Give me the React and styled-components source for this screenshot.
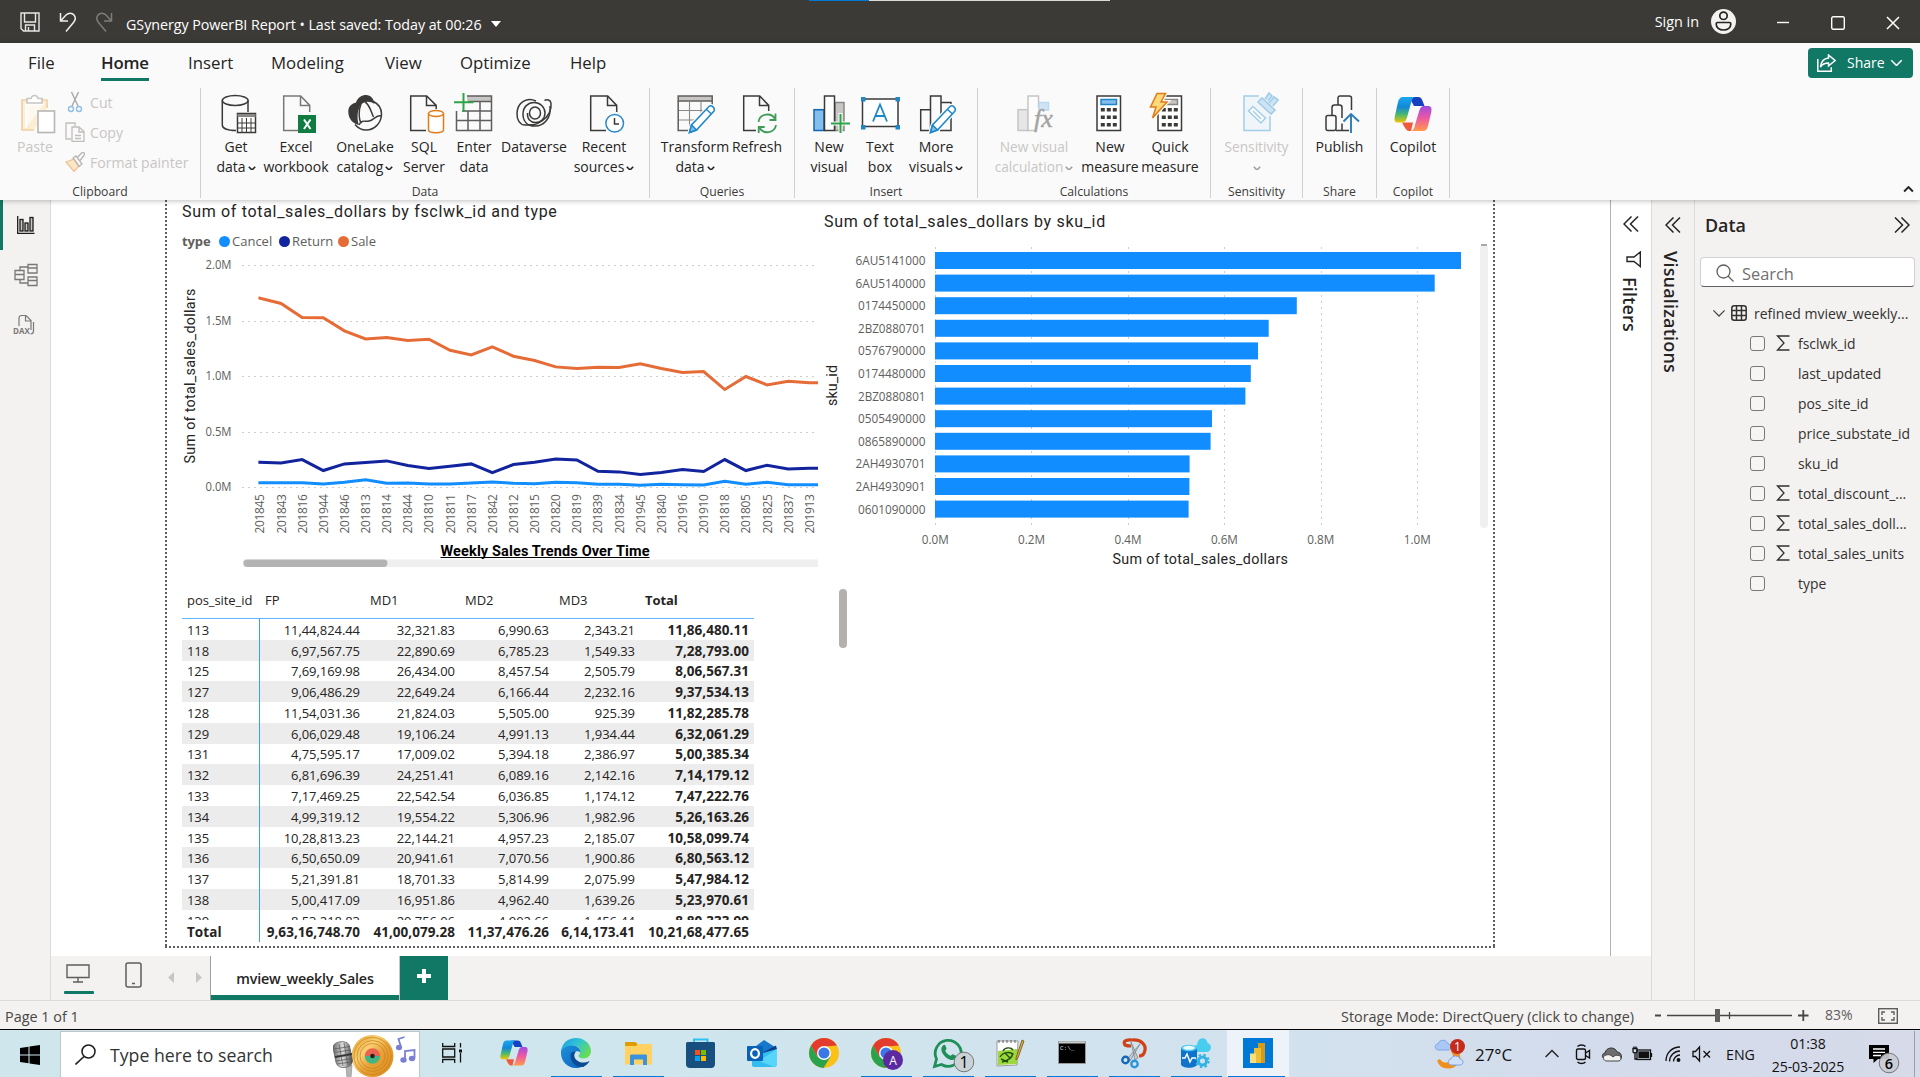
import React from "react";
import styled, { createGlobalStyle, css } from "styled-components";

const UI = `"Open Sans", "Noto Sans", sans-serif`;
const DIN = `Roboto, "Liberation Sans", sans-serif`;
const GREEN = "#117865";

const Global = createGlobalStyle`
  * { box-sizing: border-box; }
  html, body { margin: 0; padding: 0; }
  body { font-family: ${UI}; color: #252423; background: #f3f2f1; overflow: hidden; }
  svg { display: block; flex: none; }
`;

const Window = styled.div`
  width: 1920px;
  height: 1077px;
  display: flex;
  flex-direction: column;
  overflow: hidden;
`;

/* ---------- title bar ---------- */
const TitleBar = styled.header`
  height: 43px;
  flex: none;
  display: flex;
  align-items: center;
  background: #3b3a37;
  color: #fff;
  position: relative;
`;
const LoadStrip = styled.div`
  position: absolute;
  top: 0;
  left: 809px;
  width: 301px;
  height: 1px;
  background: linear-gradient(to right, #0078d4 60px, #d9d9d6 60px);
`;
const QuickTools = styled.div`
  display: flex;
  gap: 16px;
  padding-left: 20px;
  width: 126px;
`;
const DocTitle = styled.div`
  font-size: 14.3px;
  padding-top: 5px;
  letter-spacing: -0.05px;
  white-space: nowrap;
  display: flex;
  align-items: center;
  gap: 9px;
`;
const Account = styled.div`
  margin-left: auto;
  display: flex;
  align-items: center;
  gap: 12px;
  font-size: 14.4px;
  margin-right: 40px;
`;
const WindowButtons = styled.div`
  display: flex;
  gap: 41px;
  padding: 3px 20px 0 0;
`;

/* ---------- ribbon ---------- */
const Ribbon = styled.section`
  height: 157px;
  flex: none;
  background: #fafafa;
  box-shadow: 0 1px 5px rgba(0, 0, 0, 0.25);
  position: relative;
  z-index: 2;
`;
const MenuRow = styled.nav`
  height: 45px;
  display: flex;
  padding-left: 28px;
  position: relative;
`;
const MenuItem = styled.div`
  width: ${(p) => p.$w}px;
  font-size: 16.8px;
  letter-spacing: ${(p) => (p.$active ? "-0.2px" : "0")};
  line-height: 39px;
  font-weight: ${(p) => (p.$active ? 600 : 400)};
  span {
    display: inline-block;
    height: 38px;
    ${(p) => p.$active && css`border-bottom: 3px solid ${GREEN};`}
  }
`;
const ShareButton = styled.button`
  margin: 5px 7px 0 auto;
  width: 105px;
  height: 30px;
  border: 0;
  border-radius: 4px;
  background: ${GREEN};
  color: #fff;
  font: 14px ${UI};
  display: flex;
  align-items: center;
  padding: 0 0 1px 9px;
  svg:first-child { margin-right: 11px; }
  svg:last-child { margin-left: 5px; }
`;
const Groups = styled.div`
  height: 110px;
  display: flex;
  position: relative;
`;
const Group = styled.div`
  width: ${(p) => p.$w}px;
  border-right: 1px solid #d2d0ce;
  display: flex;
  flex-direction: column;
  justify-content: space-between;
`;
const GroupBody = styled.div`
  display: flex;
  padding-left: ${(p) => p.$pad || 0}px;
`;
const GroupLabel = styled.div`
  font-size: 12.2px;
  line-height: 12px;
  text-align: center;
  color: #3b3a39;
`;
const BigButton = styled.div`
  width: ${(p) => p.$w}px;
  padding-top: 6px;
  display: flex;
  flex-direction: column;
  align-items: center;
  font-size: ${(p) => (p.$off ? 13.7 : 14)}px;
  line-height: 20px;
  white-space: nowrap;
  color: ${(p) => (p.$off ? "#c8c6c4" : "#252423")};
  > svg { margin-bottom: 3px; overflow: visible; ${(p) => p.$off && "opacity: 0.45;"} }
`;
const Line = styled.span`
  display: flex;
  align-items: center;
  gap: 2px;
  height: 20px;
  svg { margin-top: 2px; }
`;
const Clip = styled.div`
  display: flex;
  padding-left: 17px;
  color: #c8c6c4;
  font-size: 14.1px;
`;
const PasteBox = styled.div`
  width: 46px;
  padding-top: 6px;
  line-height: 20px;
  svg { margin-bottom: 3px; }
`;
const ClipList = styled.div`
  display: flex;
  flex-direction: column;
`;
const ClipItem = styled.div`
  height: 30px;
  display: flex;
  align-items: center;
  gap: 5px;
  padding: 0 0 2px 2px;
`;
const Collapse = styled.div`
  margin: auto 6px 5px auto;
`;

/* ---------- work area ---------- */
const Work = styled.main`
  height: 800px;
  flex: none;
  display: flex;
`;
const Rail = styled.aside`
  width: 51px;
  border-right: 1px solid #dddbd9;
  background: #f3f2f1;
`;
const RailItem = styled.div`
  height: 50px;
  border-left: 3px solid ${(p) => (p.$active ? GREEN : "transparent")};
  display: flex;
  align-items: center;
  padding-left: 10px;
`;
const Center = styled.div`
  width: 1600px;
  display: flex;
  flex-direction: column;
`;
const CanvasRow = styled.div`
  height: 756px;
  display: flex;
`;
const Canvas = styled.div`
  width: 1560px;
  background: #fff;
  border-right: 1px solid #b3b0ad;
  padding-left: 114px;
`;
const dots = (dir) => `repeating-linear-gradient(${dir}, #605e5c 0 2px, transparent 2px 4px)`;
const Page = styled.div`
  width: 1330px;
  height: 748px;
  display: grid;
  grid-template-columns: 653px 677px;
  background: ${dots("to bottom")} left / 2px 100% no-repeat,
    ${dots("to bottom")} right / 2px 100% no-repeat,
    ${dots("to right")} bottom / 100% 2px no-repeat;
`;
const VisualTitle = styled.h3`
  margin: ${(p) => p.$m};
  font: 400 16px/22px ${DIN};
  letter-spacing: ${(p) => p.$track};
  white-space: nowrap;
  color: #252423;
`;
const Legend = styled.div`
  display: flex;
  align-items: center;
  height: 20px;
  margin: 8px 0 0 17px;
  font-size: 13px;
  color: #605e5c;
  b { width: 37px; letter-spacing: -0.1px; }
`;
const Key = styled.span`
  display: flex;
  align-items: center;
  gap: 2px;
  width: ${(p) => p.$w}px;
  &::before {
    content: "";
    width: 11px;
    height: 11px;
    border-radius: 50%;
    background: ${(p) => p.$c};
  }
`;
const ScrollThumb = styled.div`
  width: 8px;
  height: 59px;
  margin: 16px 0 0 21px;
  border-radius: 4px;
  background: #b3b0ad;
`;

/* ---------- matrix ---------- */
const Matrix = styled.div`
  margin: 11px 0 0 17px;
  width: 572px;
  font-size: 13px;
`;
const MatrixRow = styled.div`
  display: grid;
  grid-template-columns: 78px 105px 95px 94px 86px 114px;
  height: ${(p) => p.$h || 20.77}px;
  align-items: stretch;
  background: ${(p) => (p.$band ? "#ececec" : "transparent")};
  ${(p) => p.$head && "border-bottom: 1px solid #5fb3ff;"}
`;
const Cell = styled.div`
  display: flex;
  align-items: center;
  white-space: nowrap;
  color: #252423;
  letter-spacing: ${(p) => (p.$bold && !p.$head ? "0.05px" : "-0.06px")};
  font-weight: ${(p) => (p.$bold ? 700 : 400)};
  font-size: ${(p) => (p.$bold && !p.$head ? 13.5 : 13)}px;
  justify-content: ${(p) => (p.$left ? "flex-start" : "flex-end")};
  padding: ${(p) => (p.$head ? "0 0 2px 5px" : "1px 5px 0 5px")};
  ${(p) => p.$rule && "border-right: 1px solid #3a9dfb;"}
`;
const MatrixBody = styled.div`
  height: 301px;
  overflow: hidden;
`;

/* ---------- panes ---------- */
const FiltersPane = styled.aside`
  width: 40px;
  background: #fff;
  display: flex;
  flex-direction: column;
  align-items: flex-start;
  padding: 16px 0 0 12px;
`;
const VisPane = styled.aside`
  width: 44px;
  border-left: 1px solid #dddbd9;
  border-right: 1px solid #dddbd9;
  padding: 17px 0 0 13px;
  background: #f3f2f1;
`;
const SideText = styled.div`
  writing-mode: vertical-rl;
  font-size: 18px;
  font-weight: 600;
  line-height: 22px;
  letter-spacing: 0.2px;
  margin: ${(p) => p.$m};
`;
const DataPane = styled.aside`
  width: 225px;
  background: #f3f2f1;
  padding: 12px 5px 0 5px;
`;
const PaneHead = styled.div`
  display: flex;
  justify-content: space-between;
  align-items: center;
  height: 25px;
  padding: 0 5px 0 5px;
  font-size: 17.9px;
  font-weight: 600;
`;
const SearchField = styled.div`
  margin-top: 20px;
  height: 30px;
  width: 215px;
  border: 1px solid #d1d1d1;
  border-bottom-color: #616161;
  border-radius: 4px;
  background: #fff;
  display: flex;
  align-items: center;
  gap: 8px;
  padding: 2px 0 0 15px;
  font-size: 16.4px;
  color: #707070;
`;
const TreeRow = styled.div`
  height: 30px;
  display: flex;
  align-items: center;
  font-size: ${(p) => (p.$root ? 14 : 13.9)}px;
  white-space: nowrap;
  color: #323130;
  margin-top: ${(p) => (p.$root ? 11 : 0)}px;
  padding-left: ${(p) => (p.$root ? 12 : 50)}px;
`;
const TableGlyph = styled.svg`
  margin: 0 7px 0 5px;
`;
const Funnel = styled.svg`
  margin: 19px 0 0 3px;
`;
const Check = styled.span`
  width: 15px;
  height: 15px;
  border: 1px solid #7a7876;
  border-radius: 3px;
  background: #f6f5f4;
`;
const SigmaSlot = styled.span`
  width: 33px;
  padding-left: 11px;
`;

/* ---------- page tabs + status ---------- */
const TabBar = styled.div`
  height: 44px;
  background: #f3f2f1;
  display: flex;
`;
const ViewSwitch = styled.div`
  width: ${(p) => p.$w}px;
  padding: ${(p) => p.$pad};
  svg { overflow: visible; }
`;
const SwitchBar = styled.div`
  width: 30px;
  height: 3px;
  border-radius: 1px;
  margin: 8px 0 0 -2px;
  background: ${GREEN};
`;
const PageTab = styled.div`
  width: 190px;
  border-left: 1px solid #a19f9d;
  border-right: 1px solid #c8c6c4;
  box-shadow: inset 0 -5px 0 ${GREEN};
  background: #fff;
  font-size: 14.3px;
  font-weight: 600;
  letter-spacing: -0.18px;
  line-height: 46px;
  text-align: center;
`;
const AddTab = styled.div`
  width: 48px;
  background: ${GREEN};
  display: flex;
  justify-content: center;
  padding-top: 13px;
`;
const StatusBar = styled.footer`
  height: 30px;
  flex: none;
  border-top: 1px solid #dddbd9;
  border-bottom: 1px solid #000;
  background: #f3f2f1;
  display: flex;
  align-items: center;
  padding: 2px 22px 0 5px;
  font-size: 14.4px;
  color: #484644;
`;
const StatusRight = styled.div`
  margin-left: auto;
  display: flex;
  align-items: center;
`;
const Zoom = styled.span`
  width: 53px;
  color: #605e5c;
  padding-bottom: 3px;
  font-size: 14px;
`;

/* ---------- taskbar ---------- */
const Taskbar = styled.div`
  height: 47px;
  flex: none;
  display: flex;
  background: linear-gradient(to right, #cfe6ec 0, #cfe6ee 35%, #d2e2ee 65%, #d3dcec 82%, #d6dae9 100%);
  color: #111;
`;
const StartButton = styled.div`
  width: 60px;
  padding: 15px 0 0 20px;
`;
const TaskSearch = styled.div`
  width: 360px;
  margin-top: 1px;
  border: 1px solid #bfc5c8;
  border-bottom: 0;
  background: #fff;
  display: flex;
  align-items: center;
  padding-left: 14px;
  font-size: 17.7px;
  color: #333;
  svg:first-child { margin-right: 14px; }
  svg:last-child { margin-left: auto; margin-right: 2px; }
`;
const AppSlot = styled.div`
  width: ${(p) => p.$w || 62}px;
  height: 47px;
  display: flex;
  align-items: center;
  justify-content: center;
  padding-bottom: 1px;
  background-image: ${(p) => (p.$run ? "linear-gradient(#0078d7, #0078d7)" : "none")};
  background-size: 51px 1px;
  background-repeat: no-repeat;
  background-position: 6px bottom;
  ${(p) => p.$active && "background-color: rgba(255,255,255,.6); background-size: 57px 1px; background-position: 1px bottom;"}
  svg { overflow: visible; }
`;
const Tray = styled.div`
  margin-left: auto;
  display: flex;
  align-items: center;
  font-size: 14px;
  padding-top: 1px;
`;
const TrayItem = styled.div`
  width: ${(p) => p.$w}px;
  font-size: ${(p) => p.$fs || 14.2}px;
  white-space: nowrap;
  svg { overflow: visible; }
`;
const Clock = styled.div`
  width: 84px;
  text-align: center;
  font-size: 14.1px;
  letter-spacing: -0.1px;
  line-height: 22.6px;
  padding-top: 3px;
  margin-right: 19px;
`;
const ShowDesktop = styled.div`
  width: 6px;
  height: 47px;
  border-left: 1px solid #9aa0a8;
`;

/* ---------- small glyphs ---------- */
const Chev = ({ w = 9, c = "#252423", sw = 1.6, up }) => (
  <svg width={w} height={w * 0.6} viewBox="0 0 10 6" fill="none" stroke={c} strokeWidth={sw}>
    <path d={up ? "M1 5l4-4 4 4" : "M1 1l4 4 4-4"} />
  </svg>
);
const DoubleChev = ({ right }) => (
  <svg width="16" height="16" viewBox="0 0 16 16" fill="none" stroke="#252423" strokeWidth="1.5">
    <path d={right ? "M1 .5L8.5 8 1 15.500M7.500.5L15 8 7.500 15.500" : "M8.500.5L1 8l7.500 7.500M15 .5L7.500 8l7.500 7.500"} />
  </svg>
);
const Ico = ({ children, c = "#3b3a39" }) => (
  <svg width="40" height="40" viewBox="0 0 40 40" fill="none" stroke={c} strokeWidth="1.5">
    {children}
  </svg>
);
const PageShape = ({ x = 6 }) => (
  <path d={`M${x + 16} 36.500H${x + 0.7}V1.900h17l9 9.500V18M${x + 17.500} 2v9.500h9`} fill="none" />
);
const Pencil = () => (
  <g stroke="#1f86c9">
    <path d="M14.500 38.500l2-7.500L34 12.500c2.500-2 6.500 1.500 5 4.500L21.500 36z" fill="#fff" stroke="#fafafa" strokeWidth="4" />
    <path d="M14.500 38.500l2-7.500L34 12.500c2.500-2 6.500 1.500 5 4.500L21.500 36z" fill="#fff" />
    <path d="M14.500 38.500l2-7.500 5 5z" fill="#83beec" />
    <path d="M31.500 15.500l5 4.500" />
  </g>
);

const IconGetData = () => (
  <Ico>
    <path d="M20 36.500C11 36.500 6.300 34 6.300 31V6.500M32 6.500V18" />
    <ellipse cx="19.200" cy="6.500" rx="12.900" ry="5" />
    <rect x="21.500" y="19.500" width="18" height="19" fill="#fff" />
    <path d="M21.500 21.500h18" strokeWidth="3" stroke="#8a8886" />
    <path d="M21.500 29h18M21.500 34h18M26 24v14M30.500 24v14M35 24v14" strokeWidth="1" />
  </Ico>
);
const IconExcel = () => (
  <Ico c="#7a7876">
    <PageShape x={7} />
    <rect x="22" y="21" width="18" height="18" fill="#107c41" stroke="none" />
    <path d="M28 25.500l6.500 9.500M34.500 25.500L28 35" stroke="#fff" strokeWidth="2" />
  </Ico>
);
const IconOneLake = () => (
  <Ico>
    <path d="M11 8.500C13 3 17 1 21 1c5 0 8 4 8.500 9-5-3.500-12-3-15 3-2.500 5.500-2.500 13-.5 18C5 29 2.500 21 3.500 15c.8-3 3.500-5.500 7.500-6.500z" fill="#3b3a39" stroke="none" />
    <path d="M28.500 7.500c5 2.500 8 7 8 12.500C36.500 29 29.500 36 21 36c-4 0-8-2-11-5.500M14 31c3-6 6-3 10-4 5-1 6-5.500 12-5.500M16 10c-3 7-2 15 0 19.500M20 8c5 3 6 10 8.500 15" />
  </Ico>
);
const IconSql = () => (
  <Ico>
    <path d="M22 36.500H6.700V1.900h16l9.500 9.500V15M22.500 2v9.500H32" />
    <path d="M24.500 19.500v16.500c0 3.500 15 3.500 15 0V19.500" stroke="#e07b1a" fill="#fff" />
    <ellipse cx="32" cy="19.500" rx="7.500" ry="3" stroke="#e07b1a" fill="#fff" />
  </Ico>
);
const IconEnter = () => (
  <Ico c="#605e5c">
    <rect x="13" y="2" width="24.500" height="5" fill="#c8c6c4" stroke="none" />
    <path d="M13 2h24.500v34.500H2.500V17M14 7.500h23M8 17h29M2.500 26.500h35M14 17v19M26 7.500v29" />
    <path d="M9.500-1v19M0 8.300h19.500" stroke="#2da44a" strokeWidth="2" />
  </Ico>
);
const IconDataverse = () => (
  <Ico>
    <path d="M22 7C13 3 3.500 8 3 19c-.3 7 3 12 8 12 9 0 11 0 17-4s10-11 9-18c-.5-3-4-4-6.500-2.500" />
    <path d="M36 12c1.500 12-6 20-15 20-8 0-12-5-12-12S14 8.500 20 8.500 31 13 31 19s-4.500 9.500-9.500 9.500S13 25 13.500 19" />
    <ellipse cx="21" cy="19" rx="5.500" ry="6" />
  </Ico>
);
const IconRecent = () => (
  <Ico>
    <PageShape x={6} />
    <circle cx="30.700" cy="29.300" r="8.800" fill="#fff" stroke="#2b88c8" />
    <path d="M30.500 24v6h4.500" />
  </Ico>
);
const IconTransform = () => (
  <Ico c="#605e5c">
    <rect x="3.200" y="2" width="34" height="5" fill="#c8c6c4" />
    <path d="M37.200 7v6M3.200 7v29.500H14" />
    <path d="M4 16.500h27M4 26h17M14.500 7v25M26 7v14" strokeWidth="1.100" stroke="#8a8886" />
    <Pencil />
  </Ico>
);
const IconRefresh = () => (
  <Ico>
    <path d="M19 36.500H6.700V1.900h16l9 9.500V17M22.500 2v9.500h9" />
    <path d="M21.500 28c1-8.500 13-10 16.500-3M38.500 19.500V26h-6M39 31c-1 8-13 10-16.500 2.500M21.700 39v-6h6" stroke="#3f9c58" strokeWidth="1.800" />
  </Ico>
);
const IconNewVisual = () => (
  <Ico>
    <rect x="26" y="8.500" width="9" height="28" fill="#c8c6c4" stroke="#8a8886" />
    <rect x="5" y="15.700" width="10" height="20.800" fill="#83beec" stroke="#1565b0" />
    <rect x="15.500" y="2" width="10" height="34.500" fill="#fff" />
    <path d="M31.500 19v21M21 29.500h21" stroke="#fafafa" strokeWidth="4" />
    <path d="M31.500 20v19M22 29.500h19" stroke="#2da44a" strokeWidth="2" />
  </Ico>
);
const IconTextBox = () => (
  <Ico>
    <rect x="2.500" y="5" width="35.500" height="27.500" fill="#fff" />
    <g fill="#1f86c9" stroke="none">
      <rect x="1" y="3" width="4.500" height="4.500" />
      <rect x="35.500" y="3" width="4.500" height="4.500" />
      <rect x="1" y="31" width="4.500" height="4.500" />
      <rect x="35.500" y="31" width="4.500" height="4.500" />
    </g>
    <path d="M13 27.500L20 10.500l7 17M15.500 22h9" stroke="#1f86c9" strokeWidth="1.800" />
  </Ico>
);
const IconMoreVisuals = () => (
  <Ico>
    <path d="M14.500 36.500H4.700V15.700h9.500M14.500 36.500V2h10.500v20M25.500 8.500H35V36.500H24" />
    <Pencil />
  </Ico>
);
const IconNewCalc = () => (
  <svg width="40" height="40" viewBox="0 0 40 40" fill="none" stroke="#8a8886" strokeWidth="1.500">
    <rect x="4" y="15.700" width="10" height="20.800" fill="#d2d0ce" />
    <path d="M20 36.500h-6V2h10.500v12" fill="#fff" />
    <path d="M25 16V8.500h9.500V16z" fill="#9cc8ee" stroke="#6fb1e4" />
    <text x="20" y="32.500" fontFamily="Liberation Serif, serif" fontStyle="italic" fontSize="26" fill="#3b3a39" stroke="#3b3a39" strokeWidth=".5">fx</text>
  </svg>
);
const CalcBody = ({ x, tint = "#83beec", edge = "#1f86c9" }) => (
  <>
    <rect x={x} y="2" width="23.500" height="34.500" fill="#fff" />
    <rect x={x + 4} y="5.500" width="15.500" height="5" fill={tint} stroke={edge} />
    {[14, 21.5, 29].map((y) =>
      [0, 6, 12].map((d) => (
        <rect key={y + "-" + d} x={x + 3.8 + d} y={y} width="4" height="3.500" fill="#3b3a39" stroke="none" />
      ))
    )}
  </>
);
const IconMeasure = () => (
  <Ico><CalcBody x={7} /></Ico>
);
const IconQuick = () => (
  <Ico>
    <CalcBody x={8} tint="#c8c6c4" edge="#8a8886" />
    <path d="M7-.5h8.500L11 8h6L2.500 24l3.500-11H.5z" fill="#ffd87a" stroke="#fafafa" strokeWidth="4" />
    <path d="M7-.5h8.500L11 8h6L2.500 24l3.500-11H.5z" fill="#ffd87a" stroke="#e07b1a" />
  </Ico>
);
const IconSensitivity = () => (
  <Ico c="#3a9bd6">
    <path d="M22 2H7v34.500h26V22" fill="#e4f1fa" />
    <path d="M11.500 17l4.500-4.500L28.500 24 24 29z" fill="#fafafa" />
    <path d="M16 17l8 8" />
    <path d="M21 8l4-4 13 12-4 4z" fill="#9ccbe9" strokeWidth="1.700" />
    <path d="M28 5l4-6 3 3-4 5M32 9l5-6 4 3-5 6" fill="#9ccbe9" strokeWidth="1.700" />
  </Ico>
);
const IconPublish = () => (
  <Ico>
    <rect x="6" y="21.500" width="10" height="15" rx="2" />
    <path d="M12 21V13.500c0-1.500 1-2.500 2.500-2.500h5c1.500 0 2.500 1 2.500 2.500V24M22 29.500v7M18 11V4c0-1.300.8-2 2-2h9c1.500 0 2.500.8 2.500 2v12M16 36.500h13" />
    <path d="M31 39V20M23.500 27.500L31 20l8 7.500" stroke="#2b7cb8" strokeWidth="1.900" />
  </Ico>
);

const CopilotMark = ({ w, h, id, view = "0 0 38 34" }) => (
  <svg width={w} height={h} viewBox={view}>
    <defs>
      <linearGradient id={id + "a"} x1="0" y1="0" x2="0" y2="1">
        <stop offset="0" stopColor="#1ba6f0" /><stop offset=".4" stopColor="#1388d8" />
        <stop offset=".7" stopColor="#4dba6a" /><stop offset="1" stopColor="#f5c400" />
      </linearGradient>
      <linearGradient id={id + "b"} x1="0" y1="0" x2="0" y2="1">
        <stop offset="0" stopColor="#a24be0" /><stop offset=".5" stopColor="#ee5aa0" />
        <stop offset="1" stopColor="#ff9a4a" />
      </linearGradient>
    </defs>
    <path d="M15 0h9c3 0 4 2 5 5l1.500 4H20z" fill="#1540c0" />
    <path d="M8 25.500h11L17 34h-2c-2.500 0-4-3-7-8.500z" fill="#ef5a3c" />
    <path d="M9 0h13c-3 0-4 2-5 6l-4 14.500c-1 3-2 5-5 5H4C1 25.500 0 23.500.7 20L4 5c.8-3 2-5 5-5z" fill={`url(#${id}a)`} />
    <path d="M29 34H16c3 0 4-2 5-6l4-13.500c1-3 2-5.500 5-5.500h4c3 0 4 2 3.300 6L34 29c-.8 3-2 5-5 5z" fill={`url(#${id}b)`} />
  </svg>
);

/* ---------- data ---------- */
const weeks = "201845 201843 201816 201944 201846 201813 201814 201844 201810 201811 201817 201842 201812 201815 201820 201819 201839 201834 201945 201840 201916 201910 201818 201805 201825 201837 201913".split(" ");
const series = [
  ["#118DFF", [41, 41, 41, 29, 44, 68, 35, 38, 29, 29, 38, 47, 35, 32, 44, 41, 26, 26, 17, 26, 23, 20, 53, 26, 44, 23, 23]],
  ["#12239E", [225, 219, 249, 150, 210, 222, 237, 195, 168, 189, 210, 132, 204, 225, 255, 246, 144, 138, 114, 132, 159, 141, 249, 150, 198, 165, 171]],
  ["#E66C37", [1703, 1655, 1529, 1526, 1409, 1336, 1348, 1321, 1333, 1234, 1192, 1264, 1180, 1141, 1084, 1069, 1081, 1078, 1111, 1069, 1033, 1042, 880, 997, 922, 955, 940]],
];
const skus = [
  ["6AU5141000", 1461], ["6AU5140000", 1434.7], ["0174450000", 1296.8], ["2BZ0880701", 1268.7],
  ["0576790000", 1258], ["0174480000", 1250.8], ["2BZ0880801", 1245.4], ["0505490000", 1212],
  ["0865890000", 1210.6], ["2AH4930701", 1189.6], ["2AH4930901", 1189.4], ["0601090000", 1188.6],
];
const matrix = [
  ["113", "11,44,824.44", "32,321.83", "6,990.63", "2,343.21", "11,86,480.11"],
  ["118", "6,97,567.75", "22,890.69", "6,785.23", "1,549.33", "7,28,793.00"],
  ["125", "7,69,169.98", "26,434.00", "8,457.54", "2,505.79", "8,06,567.31"],
  ["127", "9,06,486.29", "22,649.24", "6,166.44", "2,232.16", "9,37,534.13"],
  ["128", "11,54,031.36", "21,824.03", "5,505.00", "925.39", "11,82,285.78"],
  ["129", "6,06,029.48", "19,106.24", "4,991.13", "1,934.44", "6,32,061.29"],
  ["131", "4,75,595.17", "17,009.02", "5,394.18", "2,386.97", "5,00,385.34"],
  ["132", "6,81,696.39", "24,251.41", "6,089.16", "2,142.16", "7,14,179.12"],
  ["133", "7,17,469.25", "22,542.54", "6,036.85", "1,174.12", "7,47,222.76"],
  ["134", "4,99,319.12", "19,554.22", "5,306.96", "1,982.96", "5,26,163.26"],
  ["135", "10,28,813.23", "22,144.21", "4,957.23", "2,185.07", "10,58,099.74"],
  ["136", "6,50,650.09", "20,941.61", "7,070.56", "1,900.86", "6,80,563.12"],
  ["137", "5,21,391.81", "18,701.33", "5,814.99", "2,075.99", "5,47,984.12"],
  ["138", "5,00,417.09", "16,951.86", "4,962.40", "1,639.26", "5,23,970.61"],
  ["139", "8,53,218.83", "20,756.06", "4,902.66", "1,456.44", "8,80,333.99"],
];
const totals = ["Total", "9,63,16,748.70", "41,00,079.28", "11,37,476.26", "6,14,173.41", "10,21,68,477.65"];
const fields = [
  ["fsclwk_id", 1], ["last_updated"], ["pos_site_id"], ["price_substate_id"], ["sku_id"],
  ["total_discount_...", 1], ["total_sales_doll...", 1], ["total_sales_units", 1], ["type"],
];

/* ---------- charts ---------- */
const X0 = 259.9, XS = 21.13, Y0 = 487.2, YM = 111;
const LineChart = () => (
  <svg width="653" height="321" viewBox="165 251 653 321" fontFamily={UI}>
    {[0, 0.5, 1, 1.5, 2].map((v) => (
      <g key={v}>
        <path d={`M242 ${Math.round(Y0 - v * YM) + 0.5}H818`} stroke="#cfcdcb" strokeWidth="1" strokeDasharray="2 4" />
        <text x="205.500" y={Y0 - v * YM + 3.8} fontSize="12" fill="#605e5c" textLength="26" lengthAdjust="spacingAndGlyphs">{v.toFixed(1)}M</text>
      </g>
    ))}
    <text transform="translate(194.500 463.500) rotate(-90)" fontFamily={DIN} fontSize="14.300" fill="#252423" textLength="175">Sum of total_sales_dollars</text>
    {weeks.map((w, i) => (
      <text key={w} transform={`translate(${X0 + i * XS + 4.5} 533.500) rotate(-90)`} fontSize="12" fill="#605e5c" textLength="39.500">{w}</text>
    ))}
    {series.map(([c, vals]) => (
      <polyline
        key={c}
        fill="none"
        stroke={c}
        strokeWidth="3"
        strokeLinecap="square"
        points={vals.map((v, i) => `${X0 + i * XS},${Y0 - (v / 1000) * YM}`).join(" ") + ` 818,${Y0 - (vals[26] / 1000) * YM}`}
      />
    ))}
    <text x="440.500" y="555.800" fontFamily={DIN} fontWeight="700" fontSize="14.500" fill="#000" textLength="209">Weekly Sales Trends Over Time</text>
    <path d="M440.500 557.500h209" stroke="#000" />
    <rect x="243" y="559.500" width="575" height="7.500" fill="#efefef" />
    <rect x="243.500" y="559.500" width="144" height="7.500" rx="3.700" fill="#b3b3b3" />
  </svg>
);
const BarChart = () => (
  <svg width="677" height="340" viewBox="818 233 677 340" fontFamily={UI}>
    {[0, 1, 2, 3, 4, 5].map((i) => (
      <g key={i}>
        <path d={`M${Math.round(935 + i * 96.4) + 0.5} 247V529`} stroke="#cfcdcb" strokeDasharray="2 4" />
        <text x={935.2 + i * 96.4 - 13.5} y="544" fontSize="12" fill="#605e5c" textLength="27" lengthAdjust="spacingAndGlyphs">{(i * 0.2).toFixed(1)}M</text>
      </g>
    ))}
    {skus.map(([name, end], i) => {
      const wide = /A/.test(name);
      return (
        <g key={name}>
          <rect x="935" y={252 + i * 22.6} width={end - 935} height="17" fill="#118DFF" />
          <text x={wide ? 855.5 : 858} y={265 + i * 22.6} fontSize="12" fill="#605e5c" textLength={wide ? 70 : 67.5} lengthAdjust="spacingAndGlyphs">{name}</text>
        </g>
      );
    })}
    <text transform="translate(836.500 406) rotate(-90)" fontFamily={DIN} fontSize="14.300" fill="#252423" textLength="41">sku_id</text>
    <text x="1112.500" y="564" fontFamily={DIN} fontSize="14.300" fill="#252423" textLength="175.500">Sum of total_sales_dollars</text>
    <rect x="1480" y="245" width="8" height="283" rx="4" fill="#f0f0f0" />
    <rect x="1481" y="244" width="6" height="2" fill="#a8a8a8" />
  </svg>
);

const ChromeMark = ({ badge }) => (
  <svg width="30" height="30" viewBox="0 0 30 30">
    <circle cx="15" cy="15" r="15" fill="#fbc116" />
    <path d="M2 7.500A15 15 0 0 1 28 7.500L15 8.500 8.500 18.700z" fill="#e33b2e" />
    <path d="M2 7.500A15 15 0 0 0 14.500 30l7-11.300H8.500z" fill="#2ba24c" />
    <circle cx="15" cy="15" r="7" fill="#fff" />
    <circle cx="15" cy="15" r="5.600" fill="#3b78e7" />
    {badge && <circle cx="22" cy="22" r="10" fill="#5b2aa0" />}
    {badge && <text x="22" y="26.500" textAnchor="middle" fontSize="12" fill="#fff" fontFamily={UI}>A</text>}
  </svg>
);

const Big = ({ w, icon, a, b, arrow, off }) => (
  <BigButton $w={w} $off={off}>
    {icon}
    <Line>{a}</Line>
    <Line>{b}{arrow && <Chev w={8} c={off ? "#a19f9d" : "#252423"} sw={2} />}</Line>
  </BigButton>
);

export default function App() {
  return (
    <>
      <Global />
      <Window>
        <TitleBar>
          <LoadStrip />
          <QuickTools>
            <svg width="20" height="20" viewBox="0 0 20 20" fill="none" stroke="#e8e8e8" strokeWidth="1.400">
              <path d="M1 1h18v18H3.500L1 16.500zM4.500 1v9h11V1M5.500 19v-6h9v6M8.500 15v4" />
            </svg>
            <svg width="22" height="20" viewBox="0 0 22 20" fill="none" stroke="#f0f0f0" strokeWidth="1.500">
              <path d="M4.500 1v8H12M5 8.500L10 3c2.500-2.500 6-2.500 8 0s1.500 5-.5 7.500L10 19.500" />
            </svg>
            <svg width="22" height="20" viewBox="0 0 22 20" fill="none" stroke="#7d7c7a" strokeWidth="1.500">
              <path d="M17.500 1v8H10M17 8.500L12 3C9.500.5 6 .5 4 3s-1.500 5 .5 7.500L12 19.500" />
            </svg>
          </QuickTools>
          <DocTitle>
            GSynergy PowerBI Report • Last saved: Today at 00:26
            <svg width="10" height="6" viewBox="0 0 10 6" fill="#fff"><path d="M0 0h10L5 6z" /></svg>
          </DocTitle>
          <Account>
            Sign in
            <svg width="25" height="25" viewBox="0 0 25 25">
              <circle cx="12.500" cy="12.500" r="12.500" fill="#f3f2f1" />
              <g fill="none" stroke="#252423" strokeWidth="1.700">
                <circle cx="12.500" cy="6.800" r="3.700" />
                <path d="M6.500 13.500h12c1 0 1.300.6 1.300 1.500 0 3.500-3 6-7.300 6s-7.300-2.500-7.300-6c0-.9.300-1.500 1.300-1.500z" />
              </g>
            </svg>
          </Account>
          <WindowButtons>
            <svg width="14" height="14" stroke="#fff" strokeWidth="1.400"><path d="M1 6.500h12" /></svg>
            <svg width="14" height="14" fill="none" stroke="#fff" strokeWidth="1.400"><rect x=".7" y=".7" width="12.600" height="12.600" rx="1.500" /></svg>
            <svg width="14" height="14" stroke="#fff" strokeWidth="1.500"><path d="M1 1l12 12M13 1L1 13" /></svg>
          </WindowButtons>
        </TitleBar>

        <Ribbon>
          <MenuRow>
            <MenuItem $w={73}><span>File</span></MenuItem>
            <MenuItem $w={87} $active><span>Home</span></MenuItem>
            <MenuItem $w={83}><span>Insert</span></MenuItem>
            <MenuItem $w={114}><span>Modeling</span></MenuItem>
            <MenuItem $w={75}><span>View</span></MenuItem>
            <MenuItem $w={110}><span>Optimize</span></MenuItem>
            <MenuItem $w={80}><span>Help</span></MenuItem>
            <ShareButton>
              <svg width="19" height="18" viewBox="0 0 19 18" fill="none" stroke="#fff" strokeWidth="1.500">
                <path d="M.8 5v12.200h13.500v-4M11.500 1l6.500 5.500-6.500 5.500V9c-4 0-6.500 1.500-8 4 .5-5 3.500-8.500 8-9z" />
              </svg>
              Share
              <Chev w={13} c="#fff" sw={1.2} />
            </ShareButton>
          </MenuRow>
          <Groups>
            <Group $w={201}>
              <Clip>
                <PasteBox>
                  <svg width="40" height="40" viewBox="0 0 40 40" fill="none" strokeWidth="1.600">
                    <path d="M17 36H5V6h25v8" stroke="#f1cfa3" fill="#fbeed3" />
                    <path d="M9 34V10h18" stroke="#fff" fill="#fdf9f0" />
                    <path d="M10 9V4.500h4c1-4 6-4 7 0h4V9z" stroke="#c8c6c4" fill="#fff" />
                    <rect x="21" y="17" width="16.500" height="21.500" fill="#fff" stroke="#b8b6b4" />
                  </svg>
                  Paste
                </PasteBox>
                <ClipList>
                  <ClipItem>
                    <svg width="20" height="22" viewBox="0 0 20 22" fill="none" stroke="#a9a7a5" strokeWidth="1.400">
                      <path d="M6.500 1l6.500 14M13.500 1L7 15" />
                      <circle cx="6" cy="18" r="2.500" stroke="#8fc0e4" /><circle cx="14" cy="18" r="2.500" stroke="#8fc0e4" />
                    </svg>
                    Cut
                  </ClipItem>
                  <ClipItem>
                    <svg width="20" height="20" viewBox="0 0 20 20" fill="none" stroke="#c0bebc" strokeWidth="1.300">
                      <path d="M6 17H1V1h9v3M7 19.300V5h7l5 4.500v9.800zM14 5v5h5M10 13.500h6M10 16.500h6" />
                    </svg>
                    Copy
                  </ClipItem>
                  <ClipItem>
                    <svg width="20" height="20" viewBox="0 0 20 20" fill="none" strokeWidth="1.300">
                      <path d="M1 10l8-3 5 7-5 5.500z" stroke="#f0c193" fill="#fbe6c8" />
                      <path d="M8 6l3-2 6 8-3 2.500zM12 6l4.500-5c2-1.500 4 .5 2.500 2.500L15 8.500" stroke="#b8b6b4" />
                    </svg>
                    Format painter
                  </ClipItem>
                </ClipList>
              </Clip>
              <GroupLabel>Clipboard</GroupLabel>
            </Group>
            <Group $w={449}>
              <GroupBody $pad={7}>
                <Big w={56} icon={<IconGetData />} a="Get" b="data" arrow />
                <Big w={64} icon={<IconExcel />} a="Excel" b="workbook" />
                <Big w={74} icon={<IconOneLake />} a="OneLake" b="catalog" arrow />
                <Big w={44} icon={<IconSql />} a="SQL" b="Server" />
                <Big w={56} icon={<IconEnter />} a="Enter" b="data" />
                <Big w={64} icon={<IconDataverse />} a="Dataverse" />
                <Big w={76} icon={<IconRecent />} a="Recent" b="sources" arrow />
              </GroupBody>
              <GroupLabel>Data</GroupLabel>
            </Group>
            <Group $w={145}>
              <GroupBody $pad={12}>
                <Big w={66} icon={<IconTransform />} a="Transform" b="data" arrow />
                <Big w={58} icon={<IconRefresh />} a="Refresh" />
              </GroupBody>
              <GroupLabel>Queries</GroupLabel>
            </Group>
            <Group $w={183}>
              <GroupBody $pad={6}>
                <Big w={56} icon={<IconNewVisual />} a="New" b="visual" />
                <Big w={46} icon={<IconTextBox />} a="Text" b="box" />
                <Big w={66} icon={<IconMoreVisuals />} a="More" b="visuals" arrow />
              </GroupBody>
              <GroupLabel>Insert</GroupLabel>
            </Group>
            <Group $w={233}>
              <GroupBody $pad={6}>
                <Big w={100} icon={<IconNewCalc />} a="New visual" b="calculation" arrow off />
                <Big w={52} icon={<IconMeasure />} a="New" b="measure" />
                <Big w={68} icon={<IconQuick />} a="Quick" b="measure" />
              </GroupBody>
              <GroupLabel>Calculations</GroupLabel>
            </Group>
            <Group $w={92}>
              <GroupBody><Big w={91} icon={<IconSensitivity />} a="Sensitivity" arrow off /></GroupBody>
              <GroupLabel>Sensitivity</GroupLabel>
            </Group>
            <Group $w={74}>
              <GroupBody><Big w={73} icon={<IconPublish />} a="Publish" /></GroupBody>
              <GroupLabel>Share</GroupLabel>
            </Group>
            <Group $w={73}>
              <GroupBody><Big w={72} icon={<CopilotMark w={38} h={40} id="r" view="0 -1 38 36" />} a="Copilot" /></GroupBody>
              <GroupLabel>Copilot</GroupLabel>
            </Group>
            <Collapse><Chev w={11} up sw={1.8} /></Collapse>
          </Groups>
        </Ribbon>

        <Work>
          <Rail>
            <RailItem $active>
              <svg width="24" height="20" viewBox="0 0 24 20" fill="#c8c6c4" stroke="#1b1a19" strokeWidth="1.300">
                <path d="M4.700 1v17.300H21.500" fill="none" />
                <rect x="7" y="4.500" width="3" height="11.500" /><rect x="12" y="8" width="3" height="8" /><rect x="17" y="2.500" width="3" height="13.500" />
              </svg>
            </RailItem>
            <RailItem>
              <svg width="25" height="24" viewBox="0 0 25 24" fill="none" stroke="#7a7876" strokeWidth="1.300">
                <path d="M2 7.500h9v9H2zM2 11.500h9M15 1.500h9v8.500h-9zM15 5h9M15 14h9v8.500h-9zM15 17.500h9M15 4H7v3M15 20H7v-3" />
              </svg>
            </RailItem>
            <RailItem>
              <svg width="23" height="22" viewBox="0 0 23 22" fill="none" stroke="#7a7876" strokeWidth="1.200">
                <path d="M6 12V4c0-1.500 1-2.500 2.500-2.500H13l5 5V16M12.500 1.500V7H18M20.500 8v9c0 2-1 3-3 3" />
                <text x="0" y="20" fontSize="8" fontWeight="700" fill="#7a7876" stroke="none" fontFamily={UI}>DAX</text>
              </svg>
            </RailItem>
          </Rail>

          <Center>
            <CanvasRow>
              <Canvas>
                <Page>
                  <div>
                    <VisualTitle $m="1px 0 0 17px" $track="0.68px">Sum of total_sales_dollars by fsclwk_id and type</VisualTitle>
                    <Legend>
                      <b>type</b>
                      <Key $c="#118DFF" $w={60}>Cancel</Key>
                      <Key $c="#12239E" $w={59}>Return</Key>
                      <Key $c="#E66C37" $w={40}>Sale</Key>
                    </Legend>
                    <LineChart />
                    <Matrix>
                      <MatrixRow $h={36} $head>
                        {["pos_site_id", "FP", "MD1", "MD2", "MD3", "Total"].map((h, i) => (
                          <Cell key={h} $left $head $bold={i === 5}>{h}</Cell>
                        ))}
                      </MatrixRow>
                      <MatrixBody>
                        {matrix.map((r, k) => (
                          <MatrixRow key={r[0]} $band={k % 2 === 1}>
                            {r.map((v, i) => (
                              <Cell key={i} $left={i === 0} $rule={i === 0} $bold={i === 5}>{v}</Cell>
                            ))}
                          </MatrixRow>
                        ))}
                      </MatrixBody>
                      <MatrixRow $h={22}>
                        {totals.map((v, i) => (
                          <Cell key={i} $left={i === 0} $rule={i === 0} $bold>{v}</Cell>
                        ))}
                      </MatrixRow>
                    </Matrix>
                  </div>
                  <div>
                    <VisualTitle $m="11px 0 0 6px" $track="0.69px">Sum of total_sales_dollars by sku_id</VisualTitle>
                    <BarChart />
                    <ScrollThumb />
                  </div>
                </Page>
              </Canvas>
              <FiltersPane>
                <DoubleChev />
                <Funnel width="16" height="17" viewBox="0 0 16 17" fill="none" stroke="#252423" strokeWidth="1.400">
                  <path d="M14.300 1v14.500L8 10.500H1V6h7z" />
                </Funnel>
                <SideText $m="9px 0 0 -4px">Filters</SideText>
              </FiltersPane>
            </CanvasRow>
            <TabBar>
              <ViewSwitch $w={74} $pad="7px 0 0 15px">
                <svg width="24" height="20" viewBox="0 0 24 20" fill="none" stroke="#605e5c" strokeWidth="1.400">
                  <path d="M1 2h22v12.500H1zM12 15v4M7 19h10" />
                </svg>
                <SwitchBar />
              </ViewSwitch>
              <ViewSwitch $w={43} $pad="6px 0 0 0">
                <svg width="17" height="26" viewBox="0 0 17 26" fill="none" stroke="#605e5c" strokeWidth="1.500">
                  <rect x="1" y="1" width="15" height="24" rx="2" /><path d="M7 21.500h3" />
                </svg>
              </ViewSwitch>
              <ViewSwitch $w={42} $pad="16px 0 0 0">
                <svg width="34" height="11" viewBox="0 0 34 11" fill="#c8c6c4"><path d="M6 0v11L0 5.500zM28 0v11l6-5.500z" /></svg>
              </ViewSwitch>
              <PageTab>mview_weekly_Sales</PageTab>
              <AddTab>
                <svg width="14" height="14" viewBox="0 0 14 14" stroke="#fff" strokeWidth="4"><path d="M7 0v14M0 7h14" /></svg>
              </AddTab>
            </TabBar>
          </Center>

          <VisPane>
            <DoubleChev />
            <SideText $m="18px 0 0 -5px">Visualizations</SideText>
          </VisPane>
          <DataPane>
            <PaneHead>Data<DoubleChev right /></PaneHead>
            <SearchField>
              <svg width="18" height="18" viewBox="0 0 18 18" fill="none" stroke="#605e5c" strokeWidth="1.300">
                <circle cx="7.500" cy="7.500" r="6.500" /><path d="M12 12l5.500 5.500" />
              </svg>
              Search
            </SearchField>
            <TreeRow $root>
              <Chev w={14} sw={0.9} c="#484644" />
              <TableGlyph width="16" height="16" viewBox="0 0 16 16" fill="none" stroke="#323130" strokeWidth="1.500">
                <rect x=".8" y=".8" width="14.400" height="14.400" rx="2.500" />
                <path d="M5.500 1v14M10.500 1v14M1 5.500h14M1 10.500h14" />
              </TableGlyph>
              refined mview_weekly...
            </TreeRow>
            {fields.map(([name, sum]) => (
              <TreeRow key={name}>
                <Check />
                <SigmaSlot>
                  {sum && (
                    <svg width="14" height="16" viewBox="0 0 14 16" fill="none" stroke="#323130" strokeWidth="1.300">
                      <path d="M13.500 1H1.500L8 8l-6.500 7h12" />
                    </svg>
                  )}
                </SigmaSlot>
                {name}
              </TreeRow>
            ))}
          </DataPane>
        </Work>

        <StatusBar>
          Page 1 of 1
          <StatusRight>
            Storage Mode: DirectQuery (click to change)
            <svg width="191" height="20" viewBox="1634 1006 191 20" fill="none" stroke="#484644" strokeWidth="1.300">
              <path d="M1655 1015.500h6M1798 1015.500h10.500M1803.300 1010v11" strokeWidth="1.800" />
              <path d="M1667 1015.500h125M1729.500 1012v7" />
              <path d="M1717.500 1009v13" strokeWidth="5" stroke="#605e5c" />
            </svg>
            <Zoom>83%</Zoom>
            <svg width="20" height="16" viewBox="0 0 20 16" fill="none" stroke="#605e5c" strokeWidth="1.400">
              <rect x=".7" y=".7" width="18.600" height="14.600" />
              <path d="M4 7V4h3M13 4h3v3M16 9v3h-3M7 12H4V9" />
            </svg>
          </StatusRight>
        </StatusBar>

        <Taskbar>
          <StartButton>
            <svg width="20" height="20" viewBox="0 0 20 20"><path d="M0 3l8.500-1.200v7.700H0zM9.500 1.600L20 0v9.500H9.500zM0 10.500h8.500v7.700L0 17zM9.500 10.500H20V20L9.500 18.400z" /></svg>
          </StartButton>
          <TaskSearch>
            <svg width="21" height="21" viewBox="0 0 21 21" fill="none" stroke="#222" strokeWidth="1.600">
              <circle cx="13.500" cy="7.500" r="6.500" /><path d="M9 12.500L.5 20.500" />
            </svg>
            Type here to search
            <svg width="84" height="46" viewBox="0 0 84 46">
              <defs>
                <linearGradient id="gold" x1="0" y1="0" x2="1" y2="1">
                  <stop offset="0" stopColor="#e39a2c" /><stop offset=".35" stopColor="#f8d073" />
                  <stop offset=".55" stopColor="#e8a33a" /><stop offset="1" stopColor="#d98818" />
                </linearGradient>
                <linearGradient id="steel" x1="0" y1="0" x2="1" y2="0">
                  <stop offset="0" stopColor="#6a6a6a" /><stop offset=".5" stopColor="#dcdcdc" /><stop offset="1" stopColor="#4a4a4a" />
                </linearGradient>
              </defs>
              <circle cx="39.500" cy="24" r="21" fill="url(#gold)" />
              <g fill="none" stroke="#c87f1a" strokeWidth=".7"><circle cx="39.500" cy="24" r="18.500" /><circle cx="39.500" cy="24" r="15.500" /><circle cx="39.500" cy="24" r="12.500" /></g>
              <path d="M31.800 24a7.700 7.700 0 0 1 15.400 0z" fill="#ea6350" />
              <path d="M31.800 24a7.700 7.700 0 0 0 15.400 0z" fill="#43b583" />
              <circle cx="39.500" cy="24" r="2.300" fill="#222" />
              <path d="M13 34l6-1-1 13h-4z" fill="#b5b5b5" stroke="#777" strokeWidth=".5" />
              <path d="M0 16c-1-7 15-9 16.500-2l3 15c-1 5-4 6-8 6.500-4 .5-7-1-8.500-5z" fill="url(#steel)" stroke="#555" strokeWidth=".7" />
              <path d="M2 25l17-3" stroke="#333" strokeWidth="2" />
              <path d="M1 17l16-2.500M1.500 20.500l16-2.500M3 29l16-2.500M4 32l14-2M6 12l4 22M11 11l4 22" stroke="#555" strokeWidth=".7" />
              <g fill="#7b7fd4" stroke="#7b7fd4" strokeWidth="1.800">
                <ellipse cx="66" cy="15.500" rx="2.200" ry="1.800" /><path d="M68 15l-2.500-8 6-2" fill="none" />
                <ellipse cx="70.500" cy="28" rx="2.300" ry="1.900" /><ellipse cx="79" cy="26.500" rx="2.300" ry="1.900" /><path d="M72 27.500V19l9.500-1v8.500" fill="none" />
              </g>
            </svg>
          </TaskSearch>
          <AppSlot $w={63}>
            <svg width="20" height="20" viewBox="0 0 20 20" fill="none" stroke="#111" strokeWidth="1.300">
              <path d="M.7 0v3.500h12V0M.7 20v-3.500h12V20M.7 6h12v8h-12zM18.500 0v4.500M18.500 10v9.500" /><path d="M18.500 6.500v3" strokeWidth="3" />
            </svg>
          </AppSlot>
          <AppSlot><CopilotMark w={28} h={26} id="t" /></AppSlot>
          <AppSlot $run>
            <svg width="30" height="30" viewBox="0 0 30 30">
              <defs>
                <linearGradient id="eg" x1="0" y1="0" x2="1" y2=".6"><stop offset="0" stopColor="#1d9be0" /><stop offset=".5" stopColor="#2fc3d6" /><stop offset="1" stopColor="#66dd55" /></linearGradient>
                <linearGradient id="eb" x1="0" y1="0" x2="1" y2="1"><stop offset="0" stopColor="#1b90dd" /><stop offset="1" stopColor="#0f5fb8" /></linearGradient>
              </defs>
              <path d="M0 13c2-5 7-6 10-6 6 0 10 4 10 8-3-3-8-2-8 2 0 6 6 9 11 8 2 0 4-1 5.500-2C25 28 20 30 15 30 6 30 0 23 0 15z" fill="url(#eb)" />
              <path d="M0 13.500C1 5 7 0 15 0c9 0 15 6.500 15 13 0 4-3 7.500-7.500 7.500-3 0-5-1-5-2.500s2-2 2-4.500C19 9 15 7 10 7.500c-5 .3-8.500 3-10 6z" fill="url(#eg)" />
              <path d="M9.500 17c0 8 6 12.500 12.500 12 3-1.500 5-3.500 6.500-6-6 3-13 1.500-15-4-.5-2 0-4 1.500-5.500-3-.5-5.500 1-5.500 3.500z" fill="#0c4a94" />
            </svg>
          </AppSlot>
          <AppSlot $run>
            <svg width="28" height="23" viewBox="0 0 28 23">
              <path d="M1 1c0-.6.4-1 1-1h9.500l2 2v2.500H1z" fill="#dd9d00" />
              <path d="M1 4h11l2-2h13c.6 0 1 .4 1 1v18.500c0 .6-.4 1-1 1H2c-.6 0-1-.4-1-1z" fill="#ffd263" />
              <path d="M6 23v-9c0-1 .7-1.500 1.500-1.500h14c1 0 1.500.5 1.500 1.500v9h-4v-5.500h-9V23z" fill="#3a92dc" />
            </svg>
          </AppSlot>
          <AppSlot>
            <svg width="29" height="30" viewBox="0 0 29 30">
              <path d="M8 6V1.500h13.500V6" fill="none" stroke="#2bc1f2" strokeWidth="2" />
              <path d="M0 5.500C0 5 .5 4 1.500 4h26c1 0 1.500 1 1.500 1.500V26c0 2.500-1.500 4-4 4H4c-2.500 0-4-1.500-4-4z" fill="#17507f" />
              <path d="M9 12h5v5H9z" fill="#f25022" /><path d="M15 12h5v5h-5z" fill="#7fba00" /><path d="M9 18h5v5H9z" fill="#00a4ef" /><path d="M15 18h5v5h-5z" fill="#ffb900" />
            </svg>
          </AppSlot>
          <AppSlot>
            <svg width="30" height="27" viewBox="0 0 30 27">
              <path d="M5 9L17 0l12.500 8v5H5z" fill="#1678cc" /><path d="M15 13L29 5.500l.8 3.500L16 19z" fill="#0a3e87" />
              <path d="M5 26V16l25-7v15c0 1.500-1 3-3 3H7z" fill="#32bdf2" /><path d="M12 21l18-12v15c0 1.500-1 3-3 3z" fill="#58d5fb" />
              <rect y="6" width="16" height="15" rx="1" fill="#0a62b8" />
              <ellipse cx="8" cy="13.500" rx="3.900" ry="4.300" fill="none" stroke="#fff" strokeWidth="2.200" />
            </svg>
          </AppSlot>
          <AppSlot><ChromeMark /></AppSlot>
          <AppSlot $run><ChromeMark badge /></AppSlot>
          <AppSlot $run>
            <svg width="30" height="30" viewBox="0 0 30 30">
              <path d="M1.500 28.500l2-7.500a13 13 0 1 1 5 5.500z" fill="none" stroke="#1f8f57" strokeWidth="2.800" />
              <path d="M10 7.500c1-1 2-.8 2.500.3l1 2.500c.2 1-1.200 2-1.200 2.500 1 2.500 3 4 5.200 5 .6 0 1.500-1.800 2.300-1.600l2.700 1.300c1 .5.500 2.500-.5 3.500-2 2-6 1-9-1.500-4-3.500-6.500-9-3-12z" fill="#1f8f57" />
              <circle cx="31" cy="24" r="9.800" fill="#c9d3d6" stroke="#777" />
              <text x="31" y="30" textAnchor="middle" fontSize="16" fill="#000" fontFamily={UI}>1</text>
            </svg>
          </AppSlot>
          <AppSlot $run>
            <svg width="28" height="28" viewBox="0 0 28 28">
              <path d="M1 2h21l-1 24-20 1z" fill="#fff" stroke="#999" /><path d="M2 12l19-2v15L2 26z" fill="#9bd83a" />
              <path d="M7 12c2-4 8-4 10-1M4 18c3-5 11-6 13-2M6 23c5-1 10-4 11-9M9 14l5 5M5 20l7 3" stroke="#234d12" strokeWidth="1.400" fill="none" />
              <path d="M20 19l6-18 2 1-6 17-2 2z" fill="#e3a736" stroke="#5f4514" strokeWidth=".7" />
              <path d="M3 1v3M7 1v3M11 1v3M15 1v3M19 1v3" stroke="#666" />
            </svg>
          </AppSlot>
          <AppSlot $run>
            <svg width="28" height="24" viewBox="0 0 28 24">
              <rect x=".5" y=".5" width="27" height="22" fill="#000" stroke="#9a9a9a" /><path d="M1 1.500h26" stroke="#ccc" strokeWidth="2" />
              <text x="2" y="9" fontSize="6" fill="#ddd" fontFamily="Liberation Mono, monospace">C:\_</text>
            </svg>
          </AppSlot>
          <AppSlot $run>
            <svg width="26" height="30" viewBox="0 0 26 30" fill="none">
              <path d="M11 2C4 1 2 4 4 7c2 1 4 1 6 1M11 2c9-1 14 5 13 10-.5 4-3 6-6 6" stroke="#cf4218" strokeWidth="3.200" />
              <path d="M10 4l7 16-3 2zM19 6L9 23l-2-3z" fill="#c5cad0" stroke="#7f868d" strokeWidth=".8" />
              <circle cx="4.500" cy="22" r="3.200" stroke="#1467b3" strokeWidth="2.400" /><circle cx="13.500" cy="26" r="3.200" stroke="#2b95dc" strokeWidth="2.400" />
            </svg>
          </AppSlot>
          <AppSlot $run>
            <svg width="30" height="30" viewBox="0 0 30 30">
              <path d="M16 14c-4-1-4-7 0-7 1-9 10-8 10.500-2 5 1 4.500 9-1 9z" fill="#49cdee" />
              <path d="M0 10v16c0 5 16 5 16 0V10z" fill="#0f74c9" /><ellipse cx="8" cy="10" rx="8" ry="3.300" fill="#4fc9ef" /><ellipse cx="8" cy="9.800" rx="6" ry="2" fill="#e8f9ff" />
              <path d="M1 20h3l2-4 3 8 2-4h4" stroke="#fff" strokeWidth="1.500" fill="none" />
              <circle cx="21.500" cy="23" r="4" fill="none" stroke="#34b4e4" strokeWidth="3" />
              <circle cx="21.500" cy="23" r="6.200" fill="none" stroke="#34b4e4" strokeWidth="2" strokeDasharray="2.400 2.500" />
            </svg>
          </AppSlot>
          <AppSlot $run $active>
            <svg width="30" height="30" viewBox="0 0 30 30">
              <rect width="30" height="30" fill="#0078d7" />
              <path d="M15 5h7v20h-7z" fill="#d59a16" /><path d="M11 10h7v15h-7z" fill="#eebd36" /><path d="M7 15.500h6V25H7z" fill="#f9e07f" />
            </svg>
          </AppSlot>
          <Tray>
            <TrayItem $w={40}>
              <svg width="30" height="30" viewBox="0 0 30 30">
                <path d="M18 13c4 6-1 13-8 12-3 0-5-2-6.500-4C5 26 8 28 13 28c8 0 14-8 9-15z" fill="#ef8f1d" stroke="#ef8f1d" strokeWidth="3" />
                <path d="M3 11c-4-1-3.500-6 0-6 1-5 9-5 10 0 4 0 4 6 0 6z" fill="#a9c8f5" stroke="#7ca7e6" />
                <path d="M16 26c-4-1-3-6 0-6 1-4 8-4 9 0 4 0 4 6 0 6z" fill="#cfe0fb" stroke="#7ca7e6" />
                <circle cx="22.500" cy="7.500" r="7.500" fill="#c42b1c" />
                <text x="22.500" y="11.800" textAnchor="middle" fontSize="12" fill="#fff" fontFamily={UI}>1</text>
              </svg>
            </TrayItem>
            <TrayItem $w={69} $fs={16.9}>27°C</TrayItem>
            <TrayItem $w={31}><Chev w={16} up sw={0.9} /></TrayItem>
            <TrayItem $w={27}>
              <svg width="16" height="20" viewBox="0 0 16 20" fill="none" stroke="#111" strokeWidth="1.400"><rect x="1.500" y="5" width="9" height="10.500" rx="1.500" /><path d="M10.500 9l4-2.500v7.500l-4-2.500M2.500 2.500c2-2 6-2 8 0M2.500 18c2 2 6 2 8 0" /></svg>
            </TrayItem>
            <TrayItem $w={30}>
              <svg width="20" height="15" viewBox="0 0 20 15"><path d="M3 12C-1 11 0 6 3 6c1-6 10-7 12-1 5 0 6 7 2 8z" fill="#6e6e6e" stroke="#333" /><path d="M5 14c-4 0-5-5-1-6 3-1 5 0 7 2 3-3 8-2 8 1 0 2-1 3-3 3z" fill="#f2f2f2" stroke="#444" /></svg>
            </TrayItem>
            <TrayItem $w={33}>
              <svg width="20" height="14" viewBox="0 0 20 14" fill="none" stroke="#111" strokeWidth="1.300"><rect x="5" y="3" width="13.500" height="9.500" /><rect x="7" y="5" width="9.500" height="5.500" fill="#111" /><path d="M19.500 6v4M1 1.500v3c0 2 4 2 4 0v-3zM2 1.500v-2M4 1.500v-2M3 5v7h2" /></svg>
            </TrayItem>
            <TrayItem $w={27}>
              <svg width="16" height="16" viewBox="0 0 16 16" fill="none" stroke="#111" strokeWidth="1.300"><path d="M1 15C1 7 7 1 15 1M4.500 15.500C4.500 9.500 9.500 5 15 5M8.500 15.500C8.500 12 11.500 9 15 9" /><circle cx="13.500" cy="14" r="1.300" fill="#111" /></svg>
            </TrayItem>
            <TrayItem $w={34}>
              <svg width="19" height="16" viewBox="0 0 19 16" fill="none" stroke="#111" strokeWidth="1.300"><path d="M1 5.500h2.500l4-4.500v14l-4-4.500H1zM11.500 5l6.500 6.500M18 5l-6.500 6.500" /></svg>
            </TrayItem>
            <TrayItem $w={40}>ENG</TrayItem>
            <Clock>01:38<br />25-03-2025</Clock>
            <TrayItem $w={45}>
              <svg width="20" height="18" viewBox="0 0 20 18">
                <path d="M0 0h20v14H9l-4.500 4v-4H0z" fill="#000" /><path d="M4 4h12M4 7.300h12M4 10.500h8" stroke="#fff" strokeWidth="1.300" />
                <circle cx="20" cy="18" r="9.800" fill="#c9ccd4" fillOpacity=".92" stroke="#777" />
                <text x="20" y="23.500" textAnchor="middle" fontSize="14.500" fontWeight="600" fill="#000" fontFamily={UI}>6</text>
              </svg>
            </TrayItem>
            <ShowDesktop />
          </Tray>
        </Taskbar>
      </Window>
    </>
  );
}
